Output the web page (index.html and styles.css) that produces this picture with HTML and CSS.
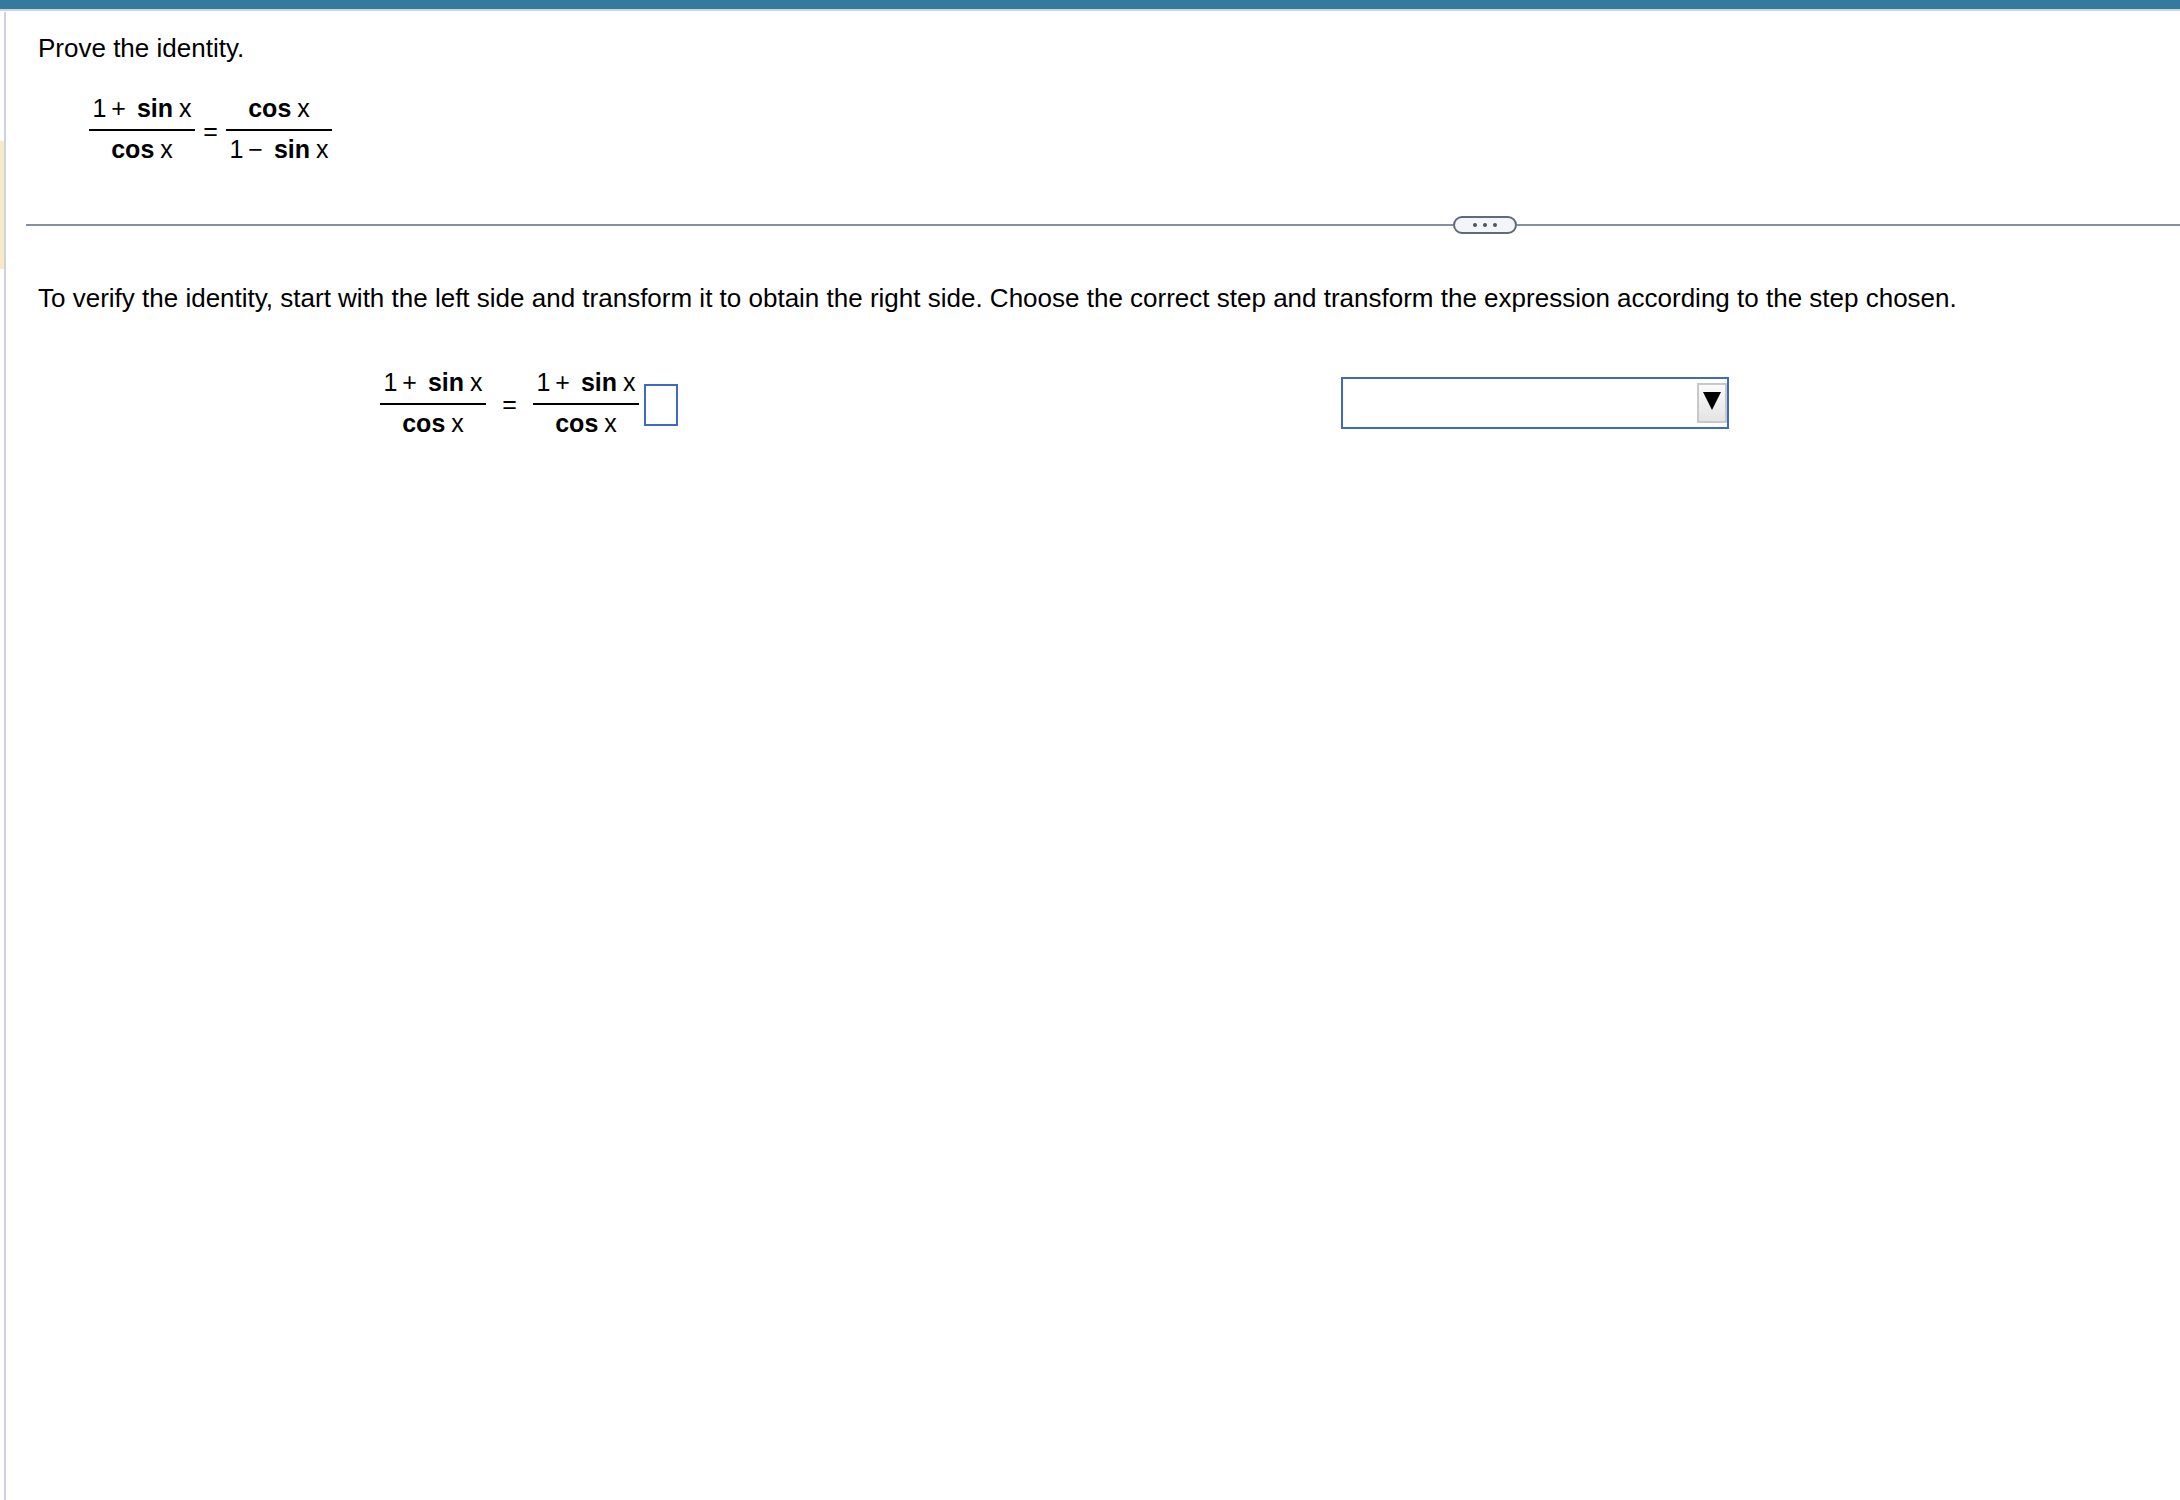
FILE: index.html
```html
<!DOCTYPE html>
<html lang="en">
<head>
  <meta charset="UTF-8">
  <title>Prove the identity</title>
  <link rel="stylesheet" href="styles.css">
</head>
<body>
  <div class="top-bar"></div>
  <div class="page">
    <div class="gutter"><div class="gutter-mark"></div></div>
    <div class="content">
      <section class="question">
        <p class="prompt">Prove the identity.</p>
        <div class="equation">
          <div class="frac">
            <div class="num">1<span class="op">+</span><b>sin</b><span class="var">x</span></div>
            <div class="den"><b>cos</b><span class="var">x</span></div>
          </div>
          <span class="eq">=</span>
          <div class="frac">
            <div class="num"><b>cos</b><span class="var">x</span></div>
            <div class="den">1<span class="op">−</span><b>sin</b><span class="var">x</span></div>
          </div>
        </div>
      </section>

      <div class="divider">
        <div class="line line-left"></div>
        <div class="pill"><i></i><i></i><i></i></div>
        <div class="line"></div>
      </div>

      <p class="instructions">To verify the identity, start with the left side and transform it to obtain the right side. Choose the correct step and transform the expression according to the step chosen.</p>

      <div class="work-row">
        <div class="equation equation-work">
          <div class="frac">
            <div class="num">1<span class="op">+</span><b>sin</b><span class="var">x</span></div>
            <div class="den"><b>cos</b><span class="var">x</span></div>
          </div>
          <span class="eq eq-work">=</span>
          <div class="frac">
            <div class="num">1<span class="op">+</span><b>sin</b><span class="var">x</span></div>
            <div class="den"><b>cos</b><span class="var">x</span></div>
          </div>
          <div class="answer-box"></div>
        </div>
        <div class="dropdown">
          <div class="dropdown-btn">
            <svg width="18" height="18" viewBox="0 0 18 18"><path d="M0 0H18L9 18Z" fill="#000"/></svg>
          </div>
        </div>
      </div>
    </div>
  </div>
</body>
</html>
```

FILE: styles.css
```css
html, body {
  height: 100%;
}
body {
  margin: 0;
  background-color: #fff;
  color: #000;
  font-family: "Liberation Sans", Arial, sans-serif;
  font-size: 26px;
  display: flex;
  flex-direction: column;
  overflow: hidden;
}
.top-bar {
  height: 9px;
  flex: none;
  background-color: #337a9c;
  border-bottom: 2px solid #cdd3e3;
}
.page {
  flex: 1;
  display: flex;
  padding-top: 1px;
}
.gutter {
  width: 4px;
  flex: none;
  padding-top: 129px;
}
.gutter-mark {
  height: 128px;
  background-color: #f7ebc6;
}
.content {
  flex: 1;
  border-left: 2px solid #d0d2e0;
  padding-top: 21px;
}
.question {
  height: 183px;
}
.prompt {
  margin: 0 0 0 32px;
  line-height: 30px;
}
.equation {
  display: flex;
  align-items: center;
  margin: 26px 0 0 83px;
}
.frac {
  display: flex;
  flex-direction: column;
  align-items: center;
  width: 106px;
  font-size: 25px;
  line-height: 38px;
}
.num {
  height: 40px;
  width: 100%;
  text-align: center;
  border-bottom: 2px solid #000;
  white-space: nowrap;
}
.den {
  height: 40px;
  line-height: 36px;
  text-align: center;
  white-space: nowrap;
}
.op {
  margin: 0 11px 0 5px;
}
.var {
  margin-left: 6px;
}
.eq {
  width: 31px;
  padding-top: 2px;
  text-align: center;
  font-size: 25px;
}
.divider {
  display: flex;
  align-items: center;
  height: 18px;
  margin-left: 20px;
}
.line {
  flex: 1;
  height: 2px;
  background-color: #868fa0;
}
.line-left {
  flex: none;
  width: 1427px;
}
.pill {
  width: 64px;
  height: 18px;
  box-sizing: border-box;
  border: 2px solid #5f6b7a;
  border-radius: 9px;
  background-color: #f3f5f8;
  display: flex;
  align-items: center;
  justify-content: center;
  gap: 6px;
}
.pill i {
  width: 4px;
  height: 4px;
  border-radius: 50%;
  background-color: #4a5462;
}
.instructions {
  margin: 49px 0 0 32px;
  line-height: 30px;
  white-space: nowrap;
}
.work-row {
  display: flex;
  align-items: flex-start;
  margin-top: 50px;
}
.equation-work {
  margin: 0 0 0 374px;
  width: 961px;
  flex: none;
}
.eq-work {
  width: 47px;
  padding-top: 0;
}
.answer-box {
  width: 34px;
  height: 42px;
  box-sizing: border-box;
  border: 2px solid #3e69c4;
  margin: 2px 0 0 5px;
}
.dropdown {
  width: 388px;
  height: 52px;
  box-sizing: border-box;
  border: 2px solid #3e69c4;
  margin-top: 14px;
  display: flex;
  justify-content: flex-end;
  align-items: center;
}
.dropdown-btn {
  width: 30px;
  height: 40px;
  box-sizing: border-box;
  border: 2px solid #c8c8c8;
  background: linear-gradient(#fafafa, #e4e4e4);
  display: flex;
  justify-content: center;
  padding-top: 7px;
}
```
